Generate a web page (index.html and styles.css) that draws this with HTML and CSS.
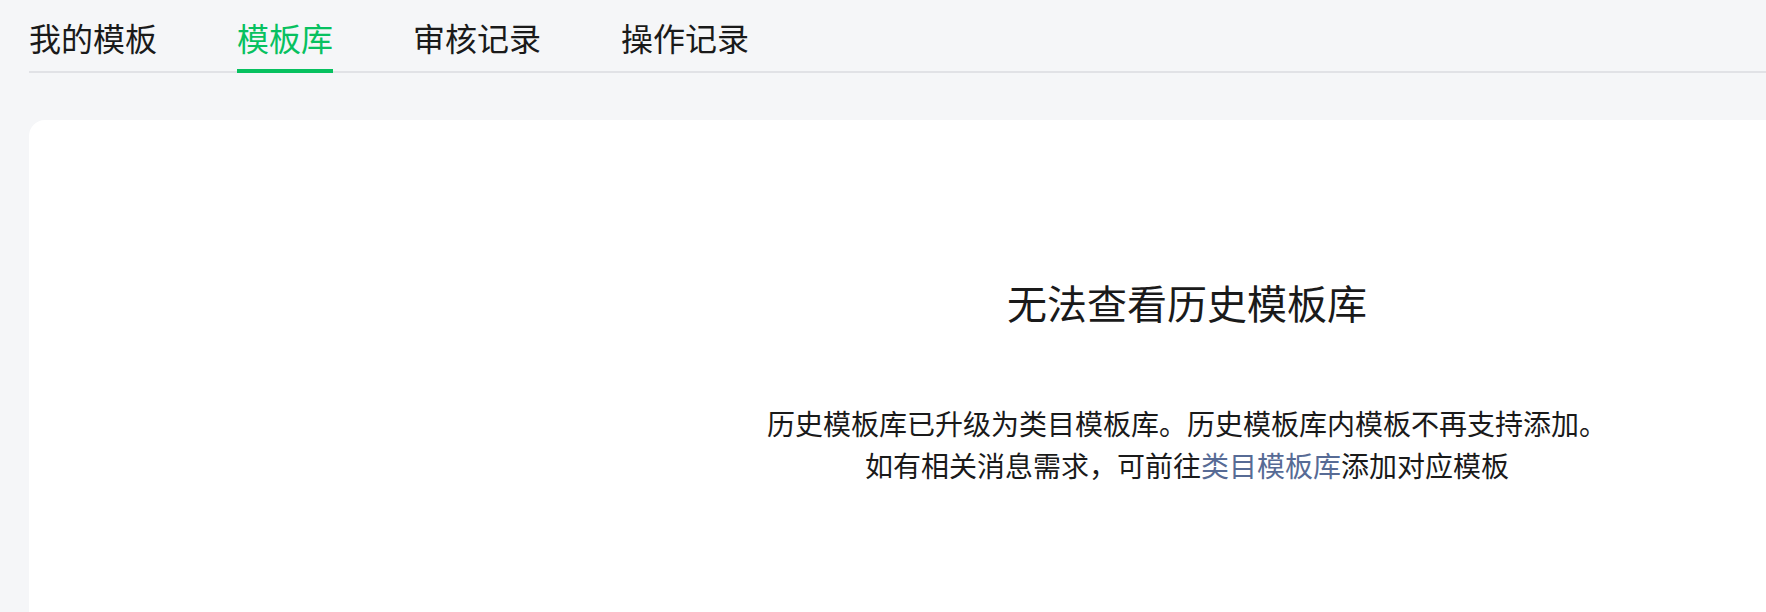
FILE: index.html
```html
<!DOCTYPE html>
<html lang="zh-CN">
<head>
<meta charset="utf-8">
<title>模板库</title>
<link rel="stylesheet" href="styles.css">
</head>
<body>
<div class="page">
  <nav class="tabs">
    <a class="tab">我的模板</a>
    <a class="tab tab-active">模板库</a>
    <a class="tab">审核记录</a>
    <a class="tab">操作记录</a>
  </nav>
  <section class="card">
    <h2 class="empty-title">无法查看历史模板库</h2>
    <p class="empty-desc">历史模板库已升级为类目模板库。历史模板库内模板不再支持添加。<br>如有相关消息需求，可前往<a class="link">类目模板库</a>添加对应模板</p>
  </section>
</div>
</body>
</html>
```
FILE: styles.css
```css
html, body {
  margin: 0;
  padding: 0;
  background: #f5f6f8;
  overflow: hidden;
}
body {
  font-family: "Noto Sans CJK SC", "Noto Sans", sans-serif;
  color: #1a1a1a;
}
.page {
  width: 2316px;
  padding: 0 29px;
}
.tabs {
  display: flex;
  gap: 80px;
  border-bottom: 2px solid #e1e2e6;
  padding-top: 14px;
}
.tab {
  font-size: 32px;
  line-height: 46px;
  padding-bottom: 9px;
  margin-bottom: -2px;
  border-bottom: 4px solid transparent;
  color: #1a1a1a;
  cursor: pointer;
}
.tab-active {
  color: #07c160;
  border-bottom-color: #07c160;
}
.card {
  margin-top: 47px;
  background: #fff;
  border-radius: 16px 16px 0 0;
  height: 600px;
  padding-top: 154px;
  text-align: center;
  box-sizing: border-box;
}
.empty-title {
  margin: 0;
  font-size: 40px;
  line-height: 56px;
  font-weight: 400;
}
.empty-desc {
  margin: 72px 0 0;
  font-size: 28px;
  line-height: 42px;
}
.link {
  color: #576b95;
  cursor: pointer;
}
```
